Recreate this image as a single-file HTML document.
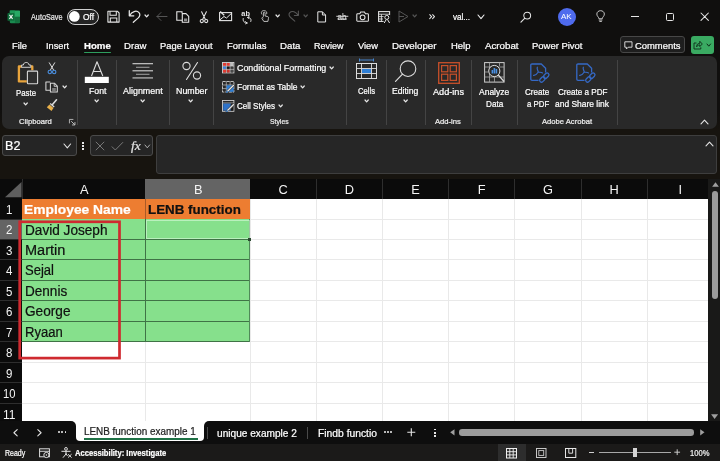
<!DOCTYPE html>
<html lang="en"><head><meta charset="utf-8"><title>Excel - LENB function</title>
<style>
html,body{margin:0;padding:0;background:#100f0e;}
#app{will-change:transform;position:relative;width:720px;height:461px;overflow:hidden;background:#100f0e;font-family:"Liberation Sans",sans-serif;}
.t{-webkit-text-stroke:0.22px currentColor;position:absolute;white-space:nowrap;transform-origin:0 50%;}
.a{position:absolute;}
svg{position:absolute;overflow:visible;}

</style></head><body>
<div id="app">
<svg style="left:7px;top:9.5px;" width="13.2" height="13.5" viewBox="0 0 13.2 13.5" fill="none"><rect x="2.8" y="0.4" width="10.2" height="12.8" rx="1.2" fill="#1a8a4f"/>
<rect x="2.8" y="0.4" width="5.1" height="6.4" fill="#1e9a58"/><rect x="7.9" y="0.8" width="5.1" height="6" fill="#28a965"/><rect x="7.9" y="6.8" width="5.1" height="6" fill="#13703e"/>
<rect x="0.5" y="3" width="7" height="7.8" rx="0.9" fill="#0f6e3b"/>
<path d="M2.4 4.9 L5.6 8.9 M5.6 4.9 L2.4 8.9" stroke="#f2f2f2" stroke-width="1.15"/></svg>
<div class="a" style="left:67px;top:9px;width:30.4px;height:13.6px;border:1px solid #cfcfcf;border-radius:8px;background:#242424;"></div>
<svg style="left:69.3px;top:11.2px;" width="10.8" height="10.8" viewBox="0 0 10.8 10.8" fill="none"><circle cx="5.4" cy="5.4" r="5.3" fill="#ffffff"/></svg>
<svg style="left:107px;top:10px;" width="13" height="13" viewBox="0 0 13 13" fill="none"><path d="M0.9 1.2 H10.3 L12.1 3 V12.1 H0.9 Z" stroke="#e6e6e6" stroke-width="1.1" stroke-linejoin="round"/>
<path d="M3 1.2 V5.2 H9.3 V1.2 M3.3 12 V8 H9.8 V12" stroke="#e6e6e6" stroke-width="1.05"/></svg>
<svg style="left:128px;top:10px;" width="13" height="13" viewBox="0 0 13 13" fill="none"><path d="M1.3 0.7 V5.8 H5.8 M1.6 5.5 C3.8 1.6 8.4 -0.2 11 2.6 C12.8 4.8 11.6 6.6 10 8.1 L5.3 12.3" stroke="#e6e6e6" stroke-width="1.25" stroke-linecap="round" stroke-linejoin="round"/></svg>
<svg style="left:143.54999999999998px;top:14.350000000000001px;" width="5.3" height="3.9" viewBox="0 0 5.3 3.9" fill="none"><path d="M1 1 L2.65 2.9 L4.3 1" stroke="#e8e8e8" stroke-width="1.2" stroke-linecap="round" stroke-linejoin="round"/></svg>
<svg style="left:156px;top:11px;" width="12" height="11" viewBox="0 0 12 11" fill="none"><path d="M11 5.5 H1 M5 1.5 L1 5.5 L5 9.5" stroke="#555" stroke-width="1" stroke-linecap="round" stroke-linejoin="round"/></svg>
<svg style="left:176.3px;top:10.8px;" width="14" height="12" viewBox="0 0 14 12" fill="none"><path d="M6 2.3 V0.8 H0.8 V9.3 H6" stroke="#e6e6e6" stroke-width="1.1"/><path d="M6.3 2.6 H10 L12.7 5.3 V11.3 H6.3 Z" stroke="#e6e6e6" stroke-width="1.1" stroke-linejoin="round"/><rect x="8" y="7.5" width="3.2" height="2.6" fill="#8a8a8a"/></svg>
<svg style="left:199px;top:10.8px;" width="10" height="13" viewBox="0 0 10 13" fill="none"><path d="M2.6 0.8 L6.3 8.3 M7.4 0.8 L3.7 8.3" stroke="#e6e6e6" stroke-width="1.05" stroke-linecap="round"/><circle cx="2.8" cy="10" r="1.6" stroke="#e6e6e6" stroke-width="1.05"/><circle cx="7.2" cy="10" r="1.6" stroke="#e6e6e6" stroke-width="1.05"/></svg>
<svg style="left:218.5px;top:10.5px;" width="13.5" height="10.5" viewBox="0 0 13.5 10.5" fill="none"><rect x="0.6" y="1.6" width="12" height="8" stroke="#e6e6e6" stroke-width="1.1"/><path d="M1 8.8 L5 5.5 L7.5 7 L12.3 2.5" stroke="#e6e6e6" stroke-width="1"/><path d="M1.2 0.5 L5.2 4.2" stroke="#e6e6e6" stroke-width="1.3"/></svg>
<svg style="left:241px;top:9.5px;" width="12" height="14" viewBox="0 0 12 14" fill="none"><text x="0.3" y="6.3" font-family="Liberation Sans, sans-serif" font-size="7.6" font-weight="700" fill="#e6e6e6" textLength="8.6" lengthAdjust="spacingAndGlyphs">ab</text><path d="M2.2 8.5 C1.5 11 3.5 13.2 6 13 M6 13 L4.6 11.6 M6 13 L4.6 13.8 M9.8 11.5 C10.8 9 9 7.2 6.8 7.4 M6.8 7.4 L8.2 6.4 M6.8 7.4 L8 8.8" stroke="#e6e6e6" stroke-width="0.95" stroke-linecap="round"/></svg>
<svg style="left:259.8px;top:10.3px;" width="9.3" height="12.7" viewBox="0 0 11 15" fill="none"><path d="M4 8 V3.5 C4 2.2 6 2.2 6 3.5 V7 L9 7.8 C10 8 10.3 8.8 10 10 L9.3 13.5 H4.5 L2.3 10 C1.8 9 3 8.4 4 9.5" stroke="#e6e6e6" stroke-width="0.95" stroke-linejoin="round"/><path d="M2.2 5.2 C0.5 2 3 0.5 5 0.7 C7.5 0.8 8.7 3 7.8 5" stroke="#e6e6e6" stroke-width="0.9"/></svg>
<svg style="left:274.55px;top:14.350000000000001px;" width="5.3" height="3.9" viewBox="0 0 5.3 3.9" fill="none"><path d="M1 1 L2.65 2.9 L4.3 1" stroke="#e8e8e8" stroke-width="1.2" stroke-linecap="round" stroke-linejoin="round"/></svg>
<svg style="left:288px;top:10.3px;" width="11.5" height="12.2" viewBox="0 0 13 13" fill="none"><path d="M11.7 0.7 V5.8 H7.2 M11.4 5.5 C9.2 1.6 4.6 -0.2 2 2.6 C0.2 4.8 1.4 6.6 3 8.1 L7.7 12.3" stroke="#565656" stroke-width="1.2" stroke-linecap="round" stroke-linejoin="round"/></svg>
<svg style="left:302.85px;top:14.350000000000001px;" width="5.3" height="3.9" viewBox="0 0 5.3 3.9" fill="none"><path d="M1 1 L2.65 2.9 L4.3 1" stroke="#555" stroke-width="1.2" stroke-linecap="round" stroke-linejoin="round"/></svg>
<svg style="left:316.7px;top:10.7px;" width="9.4" height="11.8" viewBox="0 0 9.4 11.8" fill="none"><path d="M0.8 0.8 H5.4 L8.6 4 V11 H0.8 Z M5.4 0.8 V4 H8.6" stroke="#e6e6e6" stroke-width="1" stroke-linejoin="round"/></svg>
<svg style="left:336px;top:10.5px;" width="13" height="12" viewBox="0 0 13 12" fill="none"><text x="1.6" y="9" font-family="Liberation Sans, sans-serif" font-size="8.4" fill="#e6e6e6" textLength="9" lengthAdjust="spacingAndGlyphs">ab</text><path d="M0.3 5.3 H12.3 M1.5 8 H11" stroke="#e6e6e6" stroke-width="0.9"/></svg>
<svg style="left:356.3px;top:10.6px;" width="13.5" height="11" viewBox="0 0 13.5 11" fill="none"><path d="M0.8 3.5 Q0.8 2.7 1.6 2.7 H3.8 L4.7 1 H8.5 L9.4 2.7 H11.6 Q12.4 2.7 12.4 3.5 V9.4 Q12.4 10.2 11.6 10.2 H1.6 Q0.8 10.2 0.8 9.4 Z" stroke="#e6e6e6" stroke-width="1.05"/><circle cx="6.6" cy="6.3" r="2.4" stroke="#e6e6e6" stroke-width="1.05"/></svg>
<svg style="left:378px;top:10.5px;" width="13" height="12.5" viewBox="0 0 13 12.5" fill="none"><rect x="0.6" y="0.6" width="11" height="9.8" stroke="#e6e6e6" stroke-width="1.05"/><path d="M0.6 3.2 H11.6 M0.6 5.6 H6 M0.6 8 H5 M3.4 3.2 V10.4" stroke="#e6e6e6" stroke-width="0.85"/><rect x="5.6" y="4" width="7" height="8.5" fill="#100f0e"/><circle cx="8.8" cy="6.4" r="2" stroke="#e6e6e6" stroke-width="1"/><path d="M6.2 12 L8.2 8.6 M11.6 12 L9.5 8.6" stroke="#e6e6e6" stroke-width="1"/></svg>
<svg style="left:398px;top:10px;" width="11" height="13" viewBox="0 0 11 13" fill="none"><path d="M1 1 L10 6.5 L1 12 Z M1 6.5 H6" stroke="#555" stroke-linejoin="round"/></svg>
<svg style="left:412.35px;top:14.350000000000001px;" width="5.3" height="3.9" viewBox="0 0 5.3 3.9" fill="none"><path d="M1 1 L2.65 2.9 L4.3 1" stroke="#555" stroke-width="1.2" stroke-linecap="round" stroke-linejoin="round"/></svg>
<svg style="left:428.6px;top:14.2px;" width="6.4" height="5.4" viewBox="0 0 6.4 5.4" fill="none"><path d="M0.7 0.7 L2.6 2.7 L0.7 4.7 M3.6 0.7 L5.5 2.7 L3.6 4.7" stroke="#e6e6e6" stroke-width="1.05" stroke-linecap="round" stroke-linejoin="round"/></svg>
<svg style="left:477px;top:14.2px;" width="8" height="5.6" viewBox="0 0 8 5.6" fill="none"><path d="M1 1 L4 4.6 L7 1" stroke="#eee" stroke-width="1.1" stroke-linecap="round" stroke-linejoin="round"/></svg>
<svg style="left:519.6px;top:10.8px;" width="12" height="12" viewBox="0 0 13 13" fill="none"><circle cx="7.8" cy="5" r="3.7" stroke="#e6e6e6" stroke-width="1.1"/><path d="M5 8 L1 12" stroke="#e6e6e6" stroke-width="1.2" stroke-linecap="round"/></svg>
<div class="a" style="left:557.7px;top:7.5px;width:18px;height:18px;border-radius:9px;background:#4f6bed;"></div>
<svg style="left:595.9px;top:10.2px;" width="9.2" height="12.6" viewBox="0 0 11 15" fill="none"><path d="M3.5 10 C3.5 8.5 1 7.5 1 4.8 C1 2.5 3 0.8 5.5 0.8 C8 0.8 10 2.5 10 4.8 C10 7.5 7.5 8.5 7.5 10 Z M3.8 12 H7.2 M4.5 13.7 H6.5" stroke="#e6e6e6" stroke-width="1" stroke-linejoin="round" stroke-linecap="round"/></svg>
<div class="a" style="left:630.5px;top:16px;width:8.0px;height:1px;background:#e6e6e6;"></div>
<div class="a" style="left:665.5px;top:12.5px;width:6.2px;height:6.2px;border:1px solid #e6e6e6;border-radius:1.5px;box-sizing:content-box;"></div>
<svg style="left:700.3px;top:12px;" width="9.4" height="9.4" viewBox="0 0 9.4 9.4" fill="none"><path d="M1 1 L8.4 8.4 M8.4 1 L1 8.4" stroke="#e6e6e6" stroke-width="1.05" stroke-linecap="round"/></svg>
<div class="a" style="left:83.8px;top:51.5px;width:27.5px;height:1.7px;background:#2e9e5e;border-radius:1px;"></div>
<div class="a" style="left:620px;top:36.3px;width:64.8px;height:17px;border:1px solid #474747;border-radius:3px;background:#1e1e1e;box-sizing:border-box;"></div>
<svg style="left:623.5px;top:41px;" width="9" height="9" viewBox="0 0 9 9" fill="none"><path d="M0.8 0.8 H8 V6.2 H4.2 L2.4 8 V6.2 H0.8 Z" stroke="#e6e6e6" stroke-width="0.9" stroke-linejoin="round"/></svg>
<div class="a" style="left:691px;top:36px;width:23px;height:17.5px;border-radius:3px;background:#3aaa62;"></div>
<svg style="left:693.3px;top:39.7px;" width="10" height="10" viewBox="0 0 10 10" fill="none"><path d="M3.5 3 H1 V9 H7.8 V7.3 M3.6 6.8 C3.6 4.3 5 3.3 6.8 3.3 V1.3 L9.3 4 L6.8 6.6 V4.9 C5.4 4.9 4.5 5.4 3.6 6.8 Z" stroke="#0d2b18" stroke-width="0.9" stroke-linejoin="round"/></svg>
<svg style="left:706.0px;top:43.1px;" width="5.6" height="4.2" viewBox="0 0 5.6 4.2" fill="none"><path d="M1 1 L2.8 3.2 L4.6 1" stroke="#0d2b18" stroke-width="1" stroke-linecap="round" stroke-linejoin="round"/></svg>
<div class="a" style="left:0;top:110px;width:720px;height:69px;background:linear-gradient(#100f0e,#17140f 20px);"></div>
<div class="a" style="left:2px;top:56px;width:714.5px;height:73px;border-radius:7px;background:#292929;"></div>
<div class="a" style="left:76.5px;top:60px;width:1.0px;height:65px;background:#444;"></div>
<div class="a" style="left:116.2px;top:60px;width:1.0px;height:65px;background:#444;"></div>
<div class="a" style="left:168.9px;top:60px;width:1.0px;height:65px;background:#444;"></div>
<div class="a" style="left:213.0px;top:60px;width:1.0px;height:65px;background:#444;"></div>
<div class="a" style="left:346.0px;top:60px;width:1.0px;height:65px;background:#444;"></div>
<div class="a" style="left:385.5px;top:60px;width:1.0px;height:65px;background:#444;"></div>
<div class="a" style="left:424.8px;top:60px;width:1.0px;height:65px;background:#444;"></div>
<div class="a" style="left:470.5px;top:60px;width:1.0px;height:65px;background:#444;"></div>
<div class="a" style="left:516.5px;top:60px;width:1.0px;height:65px;background:#444;"></div>
<div class="a" style="left:616.5px;top:60px;width:1.0px;height:65px;background:#444;"></div>
<svg style="left:17px;top:61px;" width="22" height="24" viewBox="0 0 22 24" fill="none"><path d="M5.2 5.5 H1.9 V20.4 H9.8" stroke="#e8a43c" stroke-width="2.3" stroke-linejoin="round"/><path d="M13.8 5.5 H15.3 V9.3" stroke="#e8a43c" stroke-width="2.3" stroke-linejoin="round"/>
<path d="M4.6 6.3 V4 H6.4 C6.4 0.6 12 0.6 12 4 H13.8 V6.3 Z" stroke="#cfcfcf" stroke-width="1" fill="#292929" stroke-linejoin="round"/>
<rect x="10.4" y="10.1" width="10.2" height="12.6" rx="0.8" stroke="#d8d8d8" stroke-width="1.1" fill="#2e2e2e"/></svg>
<svg style="left:22.650000000000002px;top:102.25px;" width="5.3" height="3.9" viewBox="0 0 5.3 3.9" fill="none"><path d="M1 1 L2.65 2.9 L4.3 1" stroke="#e8e8e8" stroke-width="1.2" stroke-linecap="round" stroke-linejoin="round"/></svg>
<svg style="left:46.5px;top:62px;" width="10" height="13" viewBox="0 0 10 13" fill="none"><path d="M2.3 0.8 L6.6 8 M7.7 0.8 L3.4 8" stroke="#dcdcdc" stroke-width="1" stroke-linecap="round"/><circle cx="2.8" cy="10" r="1.7" stroke="#4a90e2" stroke-width="1.1"/><circle cx="7.2" cy="10" r="1.7" stroke="#4a90e2" stroke-width="1.1"/></svg>
<svg style="left:44.5px;top:81px;" width="13.5" height="12" viewBox="0 0 13.5 12" fill="none"><path d="M5 1.6 V0.9 H0.9 V9.3 H5" stroke="#d8d8d8" stroke-width="1.05" stroke-linejoin="round"/><path d="M5.4 2.2 H9.4 L12.3 5.1 V11 H5.4 Z" stroke="#d8d8d8" stroke-width="1.05" stroke-linejoin="round"/><path d="M9.2 2.5 V5.3 H12" stroke="#d8d8d8" stroke-width="0.9"/><rect x="7.2" y="7" width="3.6" height="3" fill="#7d7d7d"/></svg>
<svg style="left:62.35px;top:85.25px;" width="5.3" height="3.9" viewBox="0 0 5.3 3.9" fill="none"><path d="M1 1 L2.65 2.9 L4.3 1" stroke="#e8e8e8" stroke-width="1.2" stroke-linecap="round" stroke-linejoin="round"/></svg>
<svg style="left:46px;top:99px;" width="12" height="13" viewBox="0 0 12 13" fill="none"><path d="M10.5 0.8 L6.5 5.5" stroke="#dcdcdc" stroke-width="1.6" stroke-linecap="round"/><path d="M4.2 4.5 L8.2 8" stroke="#dcdcdc" stroke-width="1.3"/><path d="M3.5 5.5 L7.5 9 L5.5 12 L0.8 8.2 Z" fill="#e8b04a"/></svg>
<svg style="left:68.6px;top:119px;" width="7" height="7" viewBox="0 0 8 8" fill="none"><path d="M0.5 5 V0.5 H5" stroke="#cfcfcf" stroke-width="0.9"/><path d="M2.5 2.5 L6.5 6.5 M6.8 3.5 V6.8 H3.5" stroke="#cfcfcf" stroke-width="1"/></svg>
<svg style="left:84px;top:60px;" width="26" height="24" viewBox="0 0 26 24" fill="none"><path d="M7.5 16 L13 1.8 L18.8 16 M9.4 11.5 H16.9" stroke="#dcdcdc" stroke-width="1.1" stroke-linejoin="round"/><rect x="0.8" y="16.8" width="24" height="6.2" fill="#ffffff"/></svg>
<svg style="left:94.05px;top:99.35px;" width="5.3" height="3.9" viewBox="0 0 5.3 3.9" fill="none"><path d="M1 1 L2.65 2.9 L4.3 1" stroke="#e8e8e8" stroke-width="1.2" stroke-linecap="round" stroke-linejoin="round"/></svg>
<svg style="left:131px;top:62px;" width="23" height="18" viewBox="0 0 23 18" fill="none"><path d="M1.5 1.7 H22" stroke="#d6d6d6" stroke-width="1.1"/><path d="M5 5.3 H18.5" stroke="#9a9a9a" stroke-width="1.1"/><path d="M1.5 8.8 H22" stroke="#d6d6d6" stroke-width="1.1"/><path d="M5 12.3 H18.5" stroke="#9a9a9a" stroke-width="1.1"/><path d="M1.5 15.9 H22" stroke="#9a9a9a" stroke-width="1.6"/></svg>
<svg style="left:139.65px;top:99.35px;" width="5.3" height="3.9" viewBox="0 0 5.3 3.9" fill="none"><path d="M1 1 L2.65 2.9 L4.3 1" stroke="#e8e8e8" stroke-width="1.2" stroke-linecap="round" stroke-linejoin="round"/></svg>
<svg style="left:182px;top:61px;" width="20" height="20" viewBox="0 0 20 20" fill="none"><circle cx="4.5" cy="5" r="3.6" stroke="#dcdcdc" stroke-width="1.1"/><circle cx="15" cy="14.5" r="3.6" stroke="#dcdcdc" stroke-width="1.1"/><path d="M15.5 1.5 L4.5 18.5" stroke="#dcdcdc" stroke-width="1.1" stroke-linecap="round"/></svg>
<svg style="left:188.35px;top:99.35px;" width="5.3" height="3.9" viewBox="0 0 5.3 3.9" fill="none"><path d="M1 1 L2.65 2.9 L4.3 1" stroke="#e8e8e8" stroke-width="1.2" stroke-linecap="round" stroke-linejoin="round"/></svg>
<svg style="left:222px;top:62px;" width="12.4" height="11.4" viewBox="0 0 12.4 11.4" fill="none"><rect x="0.5" y="0.5" width="11.4" height="10.4" stroke="#d4d4d4" stroke-width="0.9"/><rect x="1" y="1" width="3.4" height="3" fill="#e03a32"/><rect x="4.6" y="1" width="3.4" height="3" fill="#e03a32"/><rect x="8.2" y="1" width="3.2" height="3" fill="#bdbdbd"/><rect x="1" y="4.3" width="3.4" height="3" fill="#3f7fd9"/><rect x="4.6" y="4.3" width="3.4" height="3" fill="#1a1a1a"/><rect x="8.2" y="4.3" width="3.2" height="3" fill="#3a3a3a"/><rect x="1" y="7.5" width="3.4" height="3" fill="#e03a32"/><rect x="4.6" y="7.5" width="3.4" height="3" fill="#c8342c"/><rect x="8.2" y="7.5" width="3.2" height="3" fill="#4a4a4a"/><path d="M4.5 0.5 V11 M8.1 0.5 V11 M0.5 4.15 H12 M0.5 7.4 H12" stroke="#d4d4d4" stroke-width="0.6"/></svg>
<svg style="left:222px;top:81px;" width="13" height="12.4" viewBox="0 0 13 12.4" fill="none"><rect x="0.5" y="0.5" width="11.4" height="10.6" stroke="#d0d0d0" stroke-width="0.9" stroke-dasharray="3.2 0.8"/><path d="M4.3 0.5 V11 M8.1 0.5 V11 M0.5 4 H12 M0.5 7.6 H12" stroke="#bdbdbd" stroke-width="0.7"/><rect x="4.6" y="4.3" width="7" height="6.5" fill="#2f7fd6"/><path d="M11.3 3.2 L5.2 9.3 L3.6 12 L6.6 10.6 L12.6 4.6 Z" fill="#e4e4e4" stroke="#292929" stroke-width="0.6"/><path d="M3.6 12 L5 9.8 L6.2 11 Z" fill="#2f7fd6"/></svg>
<svg style="left:222px;top:99.8px;" width="13" height="12.4" viewBox="0 0 13 12.4" fill="none"><rect x="0.5" y="0.5" width="11.4" height="10.8" stroke="#d0d0d0" stroke-width="0.9"/><path d="M0.5 3 H12" stroke="#bdbdbd" stroke-width="0.8"/><rect x="1.2" y="3.6" width="7.6" height="7" fill="#2f73c9"/><rect x="8.8" y="3.6" width="2.6" height="7" fill="#1c1c1c"/><path d="M11.3 3.4 L5.2 9.5 L3.6 12.2 L6.6 10.8 L12.6 4.8 Z" fill="#e4e4e4" stroke="#292929" stroke-width="0.6"/><path d="M3.6 12.2 L5 10 L6.2 11.2 Z" fill="#2f7fd6"/></svg>
<svg style="left:329.05px;top:66.25px;" width="5.3" height="3.9" viewBox="0 0 5.3 3.9" fill="none"><path d="M1 1 L2.65 2.9 L4.3 1" stroke="#e8e8e8" stroke-width="1.2" stroke-linecap="round" stroke-linejoin="round"/></svg>
<svg style="left:299.65000000000003px;top:85.25px;" width="5.3" height="3.9" viewBox="0 0 5.3 3.9" fill="none"><path d="M1 1 L2.65 2.9 L4.3 1" stroke="#e8e8e8" stroke-width="1.2" stroke-linecap="round" stroke-linejoin="round"/></svg>
<svg style="left:277.55px;top:104.05px;" width="5.3" height="3.9" viewBox="0 0 5.3 3.9" fill="none"><path d="M1 1 L2.65 2.9 L4.3 1" stroke="#e8e8e8" stroke-width="1.2" stroke-linecap="round" stroke-linejoin="round"/></svg>
<svg style="left:355px;top:58px;" width="23" height="22" viewBox="0 0 23 22" fill="none"><path d="M4.5 2 H18.5 M4.5 0.5 V3.5 M18.5 0.5 V3.5" stroke="#4a90e2" stroke-width="0.9"/><rect x="1.5" y="5.5" width="20" height="15" stroke="#dcdcdc" stroke-width="1"/><path d="M1.5 10.5 H21.5 M1.5 15.5 H21.5 M6.5 5.5 V20.5 M16.5 5.5 V20.5" stroke="#dcdcdc" stroke-width="0.9"/><rect x="7" y="11" width="9" height="4" fill="#2f7fd6"/></svg>
<svg style="left:363.85px;top:99.35px;" width="5.3" height="3.9" viewBox="0 0 5.3 3.9" fill="none"><path d="M1 1 L2.65 2.9 L4.3 1" stroke="#e8e8e8" stroke-width="1.2" stroke-linecap="round" stroke-linejoin="round"/></svg>
<svg style="left:394px;top:60px;" width="24" height="24" viewBox="0 0 24 24" fill="none"><circle cx="14" cy="8.7" r="7.8" stroke="#dcdcdc" stroke-width="1.1"/><path d="M8.5 14.2 L1.5 21.3" stroke="#dcdcdc" stroke-width="1.2" stroke-linecap="round"/></svg>
<svg style="left:402.85px;top:99.35px;" width="5.3" height="3.9" viewBox="0 0 5.3 3.9" fill="none"><path d="M1 1 L2.65 2.9 L4.3 1" stroke="#e8e8e8" stroke-width="1.2" stroke-linecap="round" stroke-linejoin="round"/></svg>
<svg style="left:438px;top:62px;" width="22" height="22" viewBox="0 0 22 22" fill="none"><rect x="0.7" y="0.7" width="20.6" height="20.6" stroke="#c8502a" stroke-width="1.3"/><rect x="3.6" y="3.6" width="6.2" height="6.2" stroke="#c8502a" stroke-width="1.2"/><rect x="12.2" y="3.6" width="6.2" height="6.2" stroke="#c8502a" stroke-width="1.2"/><rect x="3.6" y="12.2" width="6.2" height="6.2" stroke="#c8502a" stroke-width="1.2"/><rect x="12.2" y="12.2" width="6.2" height="6.2" stroke="#c8502a" stroke-width="1.2"/></svg>
<svg style="left:484px;top:62px;" width="21" height="22" viewBox="0 0 21 22" fill="none"><rect x="0.6" y="0.6" width="19.5" height="19.5" stroke="#cfcfcf" stroke-width="1"/><path d="M0.6 5 H20 M5.5 0.6 V20 M0.6 10 H4 M0.6 15 H20 M10.5 15 V20 M15.5 0.6 V4" stroke="#a8a8a8" stroke-width="0.8"/><circle cx="10.3" cy="9" r="5.6" fill="#292929" stroke="#dcdcdc" stroke-width="1"/><path d="M14.3 13 L20 19.5" stroke="#dcdcdc" stroke-width="1.2"/><rect x="7.6" y="8" width="1.6" height="3.5" fill="#4a90e2"/><rect x="9.6" y="6" width="1.6" height="5.5" fill="#4a90e2"/><rect x="11.6" y="7" width="1.6" height="4.5" fill="#4a90e2"/></svg>
<svg style="left:530px;top:63px;" width="20" height="21" viewBox="0 0 20 21" fill="none"><path d="M8.5 17.3 H2 Q0.8 17.3 0.8 16.1 V2.2 Q0.8 1 2 1 H11.3 L15.6 5.3 V9.5" stroke="#3569c6" stroke-width="1.3" stroke-linejoin="round"/>
<path d="M7.3 4.2 C6.6 5.8 8 8 8.3 9 C7 11 5 12.6 3.6 12.4 M8.3 9 C9.5 9.3 11.5 9.3 12.5 9.9" stroke="#3569c6" stroke-width="1.2" stroke-linecap="round" stroke-linejoin="round"/>
<rect x="9.3" y="14.6" width="6.2" height="3.7" rx="1.85" transform="rotate(-45 12.4 16.45)" stroke="#3569c6" stroke-width="1.3"/>
<rect x="13.1" y="10.9" width="6.2" height="3.7" rx="1.85" transform="rotate(-45 16.2 12.75)" stroke="#3569c6" stroke-width="1.3"/></svg>
<svg style="left:575.8px;top:63px;" width="20" height="21" viewBox="0 0 20 21" fill="none"><path d="M8.5 17.3 H2 Q0.8 17.3 0.8 16.1 V2.2 Q0.8 1 2 1 H11.3 L15.6 5.3 V9.5" stroke="#3569c6" stroke-width="1.3" stroke-linejoin="round"/>
<path d="M7.3 4.2 C6.6 5.8 8 8 8.3 9 C7 11 5 12.6 3.6 12.4 M8.3 9 C9.5 9.3 11.5 9.3 12.5 9.9" stroke="#3569c6" stroke-width="1.2" stroke-linecap="round" stroke-linejoin="round"/>
<rect x="9.3" y="14.6" width="6.2" height="3.7" rx="1.85" transform="rotate(-45 12.4 16.45)" stroke="#3569c6" stroke-width="1.3"/>
<rect x="13.1" y="10.9" width="6.2" height="3.7" rx="1.85" transform="rotate(-45 16.2 12.75)" stroke="#3569c6" stroke-width="1.3"/></svg>
<svg style="left:700px;top:118.5px;" width="9" height="6" viewBox="0 0 9 6" fill="none"><path d="M1 4.8 L4.5 1.2 L8 4.8" stroke="#e6e6e6" stroke-width="1.1" stroke-linecap="round" stroke-linejoin="round"/></svg>
<div class="a" style="left:2px;top:135px;width:74.5px;height:21px;border:1px solid #4a4a4a;border-radius:3px;background:#252525;box-sizing:border-box;"></div>
<svg style="left:63.3px;top:143.29999999999998px;" width="8.6" height="5.8" viewBox="0 0 8.6 5.8" fill="none"><path d="M1 1 L4.3 4.8 L7.6 1" stroke="#e2e2e2" stroke-width="1.1" stroke-linecap="round" stroke-linejoin="round"/></svg>
<div class="a" style="left:82.3px;top:142.3px;width:1.5px;height:1.5px;background:#e6e6e6;"></div>
<div class="a" style="left:82.3px;top:145.3px;width:1.5px;height:1.5px;background:#e6e6e6;"></div>
<div class="a" style="left:82.3px;top:148.3px;width:1.5px;height:1.5px;background:#e6e6e6;"></div>
<div class="a" style="left:90px;top:135px;width:63px;height:21px;border:1px solid #4a4a4a;border-radius:3px;background:#252525;box-sizing:border-box;"></div>
<svg style="left:95px;top:140.5px;" width="10" height="10" viewBox="0 0 10 10" fill="none"><path d="M0.8 0.8 L9.2 9.2 M9.2 0.8 L0.8 9.2" stroke="#7c7c7c" stroke-width="0.95"/></svg>
<svg style="left:111px;top:141px;" width="13" height="10" viewBox="0 0 13 10" fill="none"><path d="M0.8 5.5 L4.3 9 L12 1.2" stroke="#7c7c7c" stroke-width="0.95"/></svg>
<svg style="left:144.0px;top:143.6px;" width="6.6" height="4.8" viewBox="0 0 6.6 4.8" fill="none"><path d="M1 1 L3.3 3.8 L5.6 1" stroke="#bbb" stroke-width="0.9" stroke-linecap="round" stroke-linejoin="round"/></svg>
<div class="a" style="left:156px;top:135px;width:560.5px;height:38.5px;border:1px solid #3e3e3e;border-radius:3px;background:#262626;box-sizing:border-box;"></div>
<svg style="left:705px;top:141.3px;" width="9" height="6" viewBox="0 0 9 6" fill="none"><path d="M1 4.8 L4.5 1.2 L8 4.8" stroke="#e6e6e6" stroke-width="1.1" stroke-linecap="round" stroke-linejoin="round"/></svg>
<div class="a" style="left:0px;top:178.8px;width:707.5px;height:19.8px;background:#0b0b0b;"></div>
<div class="a" style="left:0px;top:198.6px;width:22px;height:222.1px;background:#0b0b0b;"></div>
<div class="a" style="left:22px;top:198.6px;width:685.5px;height:222.1px;background:#ffffff;"></div>
<div class="a" style="left:145px;top:178.8px;width:105px;height:19.8px;background:#646464;"></div>
<div class="a" style="left:0px;top:219.04999999999998px;width:22px;height:20.45px;background:#646464;"></div>
<svg style="left:4.5px;top:181.5px;" width="16.5" height="15.3" viewBox="0 0 16.5 15.3" fill="none"><path d="M16.5 0 V15.3 H0 Z" fill="#5f5f5f"/></svg>
<div class="a" style="left:21.5px;top:178.8px;width:1.0px;height:19.8px;background:#2e2e2e;"></div>
<div class="a" style="left:315.7px;top:178.8px;width:1.0px;height:19.8px;background:#2e2e2e;"></div>
<div class="a" style="left:381.9px;top:178.8px;width:1.0px;height:19.8px;background:#2e2e2e;"></div>
<div class="a" style="left:448.1px;top:178.8px;width:1.0px;height:19.8px;background:#2e2e2e;"></div>
<div class="a" style="left:514.3px;top:178.8px;width:1.0px;height:19.8px;background:#2e2e2e;"></div>
<div class="a" style="left:580.5px;top:178.8px;width:1.0px;height:19.8px;background:#2e2e2e;"></div>
<div class="a" style="left:646.7px;top:178.8px;width:1.0px;height:19.8px;background:#2e2e2e;"></div>
<div class="a" style="left:0px;top:218.55px;width:22px;height:1.0px;background:#2e2e2e;"></div>
<div class="a" style="left:0px;top:239.0px;width:22px;height:1.0px;background:#2e2e2e;"></div>
<div class="a" style="left:0px;top:259.45px;width:22px;height:1.0px;background:#2e2e2e;"></div>
<div class="a" style="left:0px;top:279.9px;width:22px;height:1.0px;background:#2e2e2e;"></div>
<div class="a" style="left:0px;top:300.35px;width:22px;height:1.0px;background:#2e2e2e;"></div>
<div class="a" style="left:0px;top:320.8px;width:22px;height:1.0px;background:#2e2e2e;"></div>
<div class="a" style="left:0px;top:341.25px;width:22px;height:1.0px;background:#2e2e2e;"></div>
<div class="a" style="left:0px;top:361.7px;width:22px;height:1.0px;background:#2e2e2e;"></div>
<div class="a" style="left:0px;top:382.15px;width:22px;height:1.0px;background:#2e2e2e;"></div>
<div class="a" style="left:0px;top:402.6px;width:22px;height:1.0px;background:#2e2e2e;"></div>
<div class="a" style="left:144.5px;top:198.6px;width:1.0px;height:222.1px;background:#e9e9e9;"></div>
<div class="a" style="left:249.5px;top:198.6px;width:1.0px;height:222.1px;background:#e9e9e9;"></div>
<div class="a" style="left:315.7px;top:198.6px;width:1.0px;height:222.1px;background:#e9e9e9;"></div>
<div class="a" style="left:381.9px;top:198.6px;width:1.0px;height:222.1px;background:#e9e9e9;"></div>
<div class="a" style="left:448.1px;top:198.6px;width:1.0px;height:222.1px;background:#e9e9e9;"></div>
<div class="a" style="left:514.3px;top:198.6px;width:1.0px;height:222.1px;background:#e9e9e9;"></div>
<div class="a" style="left:580.5px;top:198.6px;width:1.0px;height:222.1px;background:#e9e9e9;"></div>
<div class="a" style="left:646.7px;top:198.6px;width:1.0px;height:222.1px;background:#e9e9e9;"></div>
<div class="a" style="left:22px;top:218.55px;width:685.5px;height:1.0px;background:#e9e9e9;"></div>
<div class="a" style="left:22px;top:239.0px;width:685.5px;height:1.0px;background:#e9e9e9;"></div>
<div class="a" style="left:22px;top:259.45px;width:685.5px;height:1.0px;background:#e9e9e9;"></div>
<div class="a" style="left:22px;top:279.9px;width:685.5px;height:1.0px;background:#e9e9e9;"></div>
<div class="a" style="left:22px;top:300.35px;width:685.5px;height:1.0px;background:#e9e9e9;"></div>
<div class="a" style="left:22px;top:320.8px;width:685.5px;height:1.0px;background:#e9e9e9;"></div>
<div class="a" style="left:22px;top:341.25px;width:685.5px;height:1.0px;background:#e9e9e9;"></div>
<div class="a" style="left:22px;top:361.7px;width:685.5px;height:1.0px;background:#e9e9e9;"></div>
<div class="a" style="left:22px;top:382.15px;width:685.5px;height:1.0px;background:#e9e9e9;"></div>
<div class="a" style="left:22px;top:402.6px;width:685.5px;height:1.0px;background:#e9e9e9;"></div>
<div class="a" style="left:22px;top:198.6px;width:228px;height:20.45px;background:#ed7d31;"></div>
<div class="a" style="left:144.5px;top:198.6px;width:1.0px;height:20.45px;background:#a85a28;"></div>
<div class="a" style="left:22px;top:219.04999999999998px;width:228px;height:122.7px;background:#86e08c;"></div>
<div class="a" style="left:22px;top:239.0px;width:228.3px;height:1.0px;background:#3f7346;"></div>
<div class="a" style="left:22px;top:259.45px;width:228.3px;height:1.0px;background:#3f7346;"></div>
<div class="a" style="left:22px;top:279.9px;width:228.3px;height:1.0px;background:#3f7346;"></div>
<div class="a" style="left:22px;top:300.35px;width:228.3px;height:1.0px;background:#3f7346;"></div>
<div class="a" style="left:22px;top:320.8px;width:228.3px;height:1.0px;background:#3f7346;"></div>
<div class="a" style="left:22px;top:341.25px;width:228.3px;height:1.0px;background:#3f7346;"></div>
<div class="a" style="left:144.5px;top:219.04999999999998px;width:1.0px;height:122.7px;background:#3f7346;"></div>
<div class="a" style="left:249.4px;top:219.04999999999998px;width:0.9px;height:122.7px;background:#4f8a58;"></div>
<div class="a" style="left:145.5px;top:219.55px;width:104px;height:19.45px;border:1px solid rgba(235,255,238,0.5);box-sizing:border-box;"></div>
<div class="a" style="left:248.3px;top:238.3px;width:2.7px;height:2.7px;background:#2a4a30;"></div>
<svg style="left:0px;top:0px;" width="720" height="461" viewBox="0 0 720 461" fill="none"><rect x="19.7" y="221.8" width="99.8" height="136.3" stroke="#cf2a30" stroke-width="2.7"/></svg>
<div class="a" style="left:707.5px;top:178.8px;width:12.5px;height:242.4px;background:#191918;"></div>
<svg style="left:711.5px;top:182.3px;" width="7" height="5" viewBox="0 0 7 5" fill="none"><path d="M3.5 0.2 L6.9 4.8 H0.1 Z" fill="#a0a0a0"/></svg>
<div class="a" style="left:712.2px;top:190.5px;width:6.1px;height:108.5px;border-radius:3.05px;background:#9b9b9b;"></div>
<svg style="left:711.3px;top:413.8px;" width="7.2" height="5" viewBox="0 0 7.2 5" fill="none"><path d="M3.6 4.9 L7.1 0.2 H0.1 Z" fill="#a0a0a0"/></svg>
<div class="a" style="left:60px;top:420.7px;width:160px;height:7.3px;background:#ffffff;"></div>
<div class="a" style="left:0px;top:421.2px;width:75.5px;height:22.8px;background:#0e0e0e;border-top-right-radius:5px;"></div>
<div class="a" style="left:204px;top:421.2px;width:516px;height:22.8px;background:#0e0e0e;border-top-left-radius:5px;"></div>
<div class="a" style="left:75.5px;top:421px;width:128.5px;height:20.3px;background:#ffffff;border-radius:0 0 4px 4px;"></div>
<div class="a" style="left:0px;top:441.3px;width:720px;height:2.7px;background:#0e0e0e;"></div>
<div class="a" style="left:0px;top:443.8px;width:720px;height:17.2px;background:#1b1a19;"></div>
<div class="a" style="left:83.5px;top:438.2px;width:114.0px;height:1.8px;background:#1e7145;"></div>
<svg style="left:12.5px;top:429px;" width="5" height="7.5" viewBox="0 0 5 7.5" fill="none"><path d="M4.2 0.6 L0.9 3.75 L4.2 6.9" stroke="#e6e6e6" stroke-width="1.05" stroke-linecap="round" stroke-linejoin="round"/></svg>
<svg style="left:36.5px;top:429px;" width="5" height="7.5" viewBox="0 0 5 7.5" fill="none"><path d="M0.8 0.6 L4.1 3.75 L0.8 6.9" stroke="#e6e6e6" stroke-width="1.05" stroke-linecap="round" stroke-linejoin="round"/></svg>
<div class="a" style="left:58.3px;top:431.3px;width:1.7px;height:1.7px;background:#f0f0f0;border-radius:1px;"></div>
<div class="a" style="left:61.4px;top:431.3px;width:1.7px;height:1.7px;background:#f0f0f0;border-radius:1px;"></div>
<div class="a" style="left:64.5px;top:431.3px;width:1.7px;height:1.7px;background:#f0f0f0;border-radius:1px;"></div>
<div class="a" style="left:206.6px;top:427px;width:1.0px;height:12px;background:#4a4a4a;"></div>
<div class="a" style="left:307px;top:427px;width:1px;height:12px;background:#4a4a4a;"></div>
<div class="a" style="left:384px;top:431.3px;width:1.6px;height:1.6px;background:#f0f0f0;border-radius:1px;"></div>
<div class="a" style="left:387.1px;top:431.3px;width:1.6px;height:1.6px;background:#f0f0f0;border-radius:1px;"></div>
<div class="a" style="left:390.2px;top:431.3px;width:1.6px;height:1.6px;background:#f0f0f0;border-radius:1px;"></div>
<svg style="left:407px;top:428.2px;" width="8.6" height="8.6" viewBox="0 0 8.6 8.6" fill="none"><path d="M4.3 0.3 V8.3 M0.3 4.3 H8.3" stroke="#e6e6e6" stroke-width="1.1"/></svg>
<div class="a" style="left:434.3px;top:428.8px;width:1.5px;height:1.5px;background:#e6e6e6;"></div>
<div class="a" style="left:434.3px;top:432px;width:1.5px;height:1.5px;background:#e6e6e6;"></div>
<div class="a" style="left:434.3px;top:435.2px;width:1.5px;height:1.5px;background:#e6e6e6;"></div>
<svg style="left:450px;top:429.3px;" width="4.6" height="6.6" viewBox="0 0 4.6 6.6" fill="none"><path d="M4.5 0.2 V6.4 L0.2 3.3 Z" fill="#a0a0a0"/></svg>
<div class="a" style="left:458.8px;top:429.2px;width:235px;height:6.4px;border-radius:3.2px;background:#9c9c9c;"></div>
<svg style="left:700.3px;top:429.3px;" width="4.6" height="6.6" viewBox="0 0 4.6 6.6" fill="none"><path d="M0.2 0.2 V6.4 L4.5 3.3 Z" fill="#a0a0a0"/></svg>
<div class="a" style="left:497.5px;top:444px;width:28.5px;height:17px;background:#2d2d2d;"></div>
<svg style="left:38.5px;top:447.5px;" width="12" height="11" viewBox="0 0 12 11" fill="none"><rect x="0.6" y="0.8" width="9.8" height="8" stroke="#e6e6e6" stroke-width="0.95"/><path d="M0.6 3.3 H10.4" stroke="#e6e6e6" stroke-width="0.9"/><circle cx="7.4" cy="7" r="2.6" fill="#1b1a19" stroke="#e6e6e6" stroke-width="0.95"/><circle cx="7.4" cy="7" r="0.8" fill="#e6e6e6"/></svg>
<svg style="left:61px;top:447.3px;" width="12" height="11" viewBox="0 0 12 11" fill="none"><circle cx="5" cy="1.9" r="1.4" stroke="#e6e6e6" stroke-width="0.95"/><path d="M0.8 4.3 H9.2 M5 4.3 V7 M5 7 L2.2 10.4 M5 7 L6.3 8.6" stroke="#e6e6e6" stroke-width="1" stroke-linecap="round"/><path d="M7 7.2 L10.6 10.6 M10.6 7.2 L7 10.6" stroke="#e6e6e6" stroke-width="0.95"/></svg>
<svg style="left:506.3px;top:447.5px;" width="11" height="10.5" viewBox="0 0 11 10.5" fill="none"><rect x="0.5" y="0.5" width="10" height="9.5" stroke="#f0f0f0" stroke-width="1"/><path d="M3.8 0.5 V10 M7.2 0.5 V10 M0.5 3.7 H10.5 M0.5 6.9 H10.5" stroke="#f0f0f0" stroke-width="0.9"/></svg>
<svg style="left:535.8px;top:447.8px;" width="10.5" height="10" viewBox="0 0 10.5 10" fill="none"><rect x="0.5" y="0.5" width="9.5" height="9" stroke="#d0d0d0" stroke-width="0.95"/><rect x="2.8" y="2.6" width="4.9" height="4.8" stroke="#d0d0d0" stroke-width="0.85"/></svg>
<svg style="left:565px;top:447.5px;" width="11.5" height="10" viewBox="0 0 11.5 10" fill="none"><rect x="0.5" y="0.5" width="10.3" height="9" stroke="#e6e6e6" stroke-width="1"/><path d="M3.8 0.5 V5.2 H7.6 V0.5" stroke="#e6e6e6" stroke-width="0.95"/></svg>
<div class="a" style="left:589.3px;top:452.1px;width:5.2px;height:0.9px;background:#d0d0d0;"></div>
<div class="a" style="left:598.8px;top:452.2px;width:72.5px;height:0.8px;background:#a8a8a8;"></div>
<div class="a" style="left:633.2px;top:448px;width:3.6px;height:9.2px;background:#d4d4d4;"></div>
<svg style="left:674.3px;top:449.4px;" width="6.4" height="6.4" viewBox="0 0 6.4 6.4" fill="none"><path d="M3.2 0.3 V6.1 M0.3 3.2 H6.1" stroke="#d0d0d0" stroke-width="0.95"/></svg>
<span class="t" style="left:31px;top:13px;font-size:8.2px;line-height:10.66px;color:#e8e8e8;transform:scaleX(0.8869);">AutoSave</span>
<span class="t" style="left:83px;top:13px;font-size:8.2px;line-height:10.66px;color:#fff;transform:scaleX(1.0203);">Off</span>
<span class="t" style="left:453px;top:12px;font-size:8.6px;line-height:11.18px;color:#fff;transform:scaleX(0.9363);">val...</span>
<span class="t" style="left:561.3px;top:12px;font-size:7.4px;line-height:9.62px;color:#fff;transform:scaleX(1.0853);-webkit-text-stroke:0;">AK</span>
<span class="t" style="left:12px;top:40px;font-size:9.4px;line-height:12.22px;color:#fff;transform:scaleX(0.9928);">File</span>
<span class="t" style="left:46px;top:40px;font-size:9.4px;line-height:12.22px;color:#fff;transform:scaleX(0.9807);">Insert</span>
<span class="t" style="left:84px;top:40px;font-size:9.4px;line-height:12.22px;color:#fff;font-weight:700;transform:scaleX(1.0289);">Home</span>
<span class="t" style="left:124px;top:40px;font-size:9.4px;line-height:12.22px;color:#fff;transform:scaleX(1.0278);">Draw</span>
<span class="t" style="left:160px;top:40px;font-size:9.4px;line-height:12.22px;color:#fff;transform:scaleX(0.9970);">Page Layout</span>
<span class="t" style="left:227px;top:40px;font-size:9.4px;line-height:12.22px;color:#fff;transform:scaleX(1.0108);">Formulas</span>
<span class="t" style="left:280px;top:40px;font-size:9.4px;line-height:12.22px;color:#fff;transform:scaleX(1.0347);">Data</span>
<span class="t" style="left:314px;top:40px;font-size:9.4px;line-height:12.22px;color:#fff;transform:scaleX(0.9593);">Review</span>
<span class="t" style="left:358px;top:40px;font-size:9.4px;line-height:12.22px;color:#fff;transform:scaleX(0.9922);">View</span>
<span class="t" style="left:392px;top:40px;font-size:9.4px;line-height:12.22px;color:#fff;transform:scaleX(1.0413);">Developer</span>
<span class="t" style="left:451px;top:40px;font-size:9.4px;line-height:12.22px;color:#fff;transform:scaleX(1.0113);">Help</span>
<span class="t" style="left:485px;top:40px;font-size:9.4px;line-height:12.22px;color:#fff;transform:scaleX(1.0368);">Acrobat</span>
<span class="t" style="left:532px;top:40px;font-size:9.4px;line-height:12.22px;color:#fff;transform:scaleX(1.0094);">Power Pivot</span>
<span class="t" style="left:635px;top:40px;font-size:9.4px;line-height:12.22px;color:#fff;transform:scaleX(1.0038);">Comments</span>
<span class="t" style="left:15.8px;top:87px;font-size:9.3px;line-height:12.09px;color:#fff;transform:scaleX(0.8410);">Paste</span>
<span class="t" style="left:18.5px;top:117px;font-size:8.0px;line-height:10.4px;color:#f0f0f0;transform:scaleX(0.9577);">Clipboard</span>
<span class="t" style="left:88.5px;top:85px;font-size:9.3px;line-height:12.09px;color:#fff;transform:scaleX(0.9404);">Font</span>
<span class="t" style="left:122.8px;top:85px;font-size:9.3px;line-height:12.09px;color:#fff;transform:scaleX(0.9602);">Alignment</span>
<span class="t" style="left:175.5px;top:85px;font-size:9.3px;line-height:12.09px;color:#fff;transform:scaleX(0.9523);">Number</span>
<span class="t" style="left:237px;top:62px;font-size:9.3px;line-height:12.09px;color:#fff;transform:scaleX(0.9546);">Conditional Formatting</span>
<span class="t" style="left:237px;top:81px;font-size:9.3px;line-height:12.09px;color:#fff;transform:scaleX(0.9098);">Format as Table</span>
<span class="t" style="left:237px;top:100px;font-size:9.3px;line-height:12.09px;color:#fff;transform:scaleX(0.8652);">Cell Styles</span>
<span class="t" style="left:270.4px;top:117px;font-size:8.0px;line-height:10.4px;color:#f0f0f0;transform:scaleX(0.8533);">Styles</span>
<span class="t" style="left:358px;top:85px;font-size:9.3px;line-height:12.09px;color:#fff;transform:scaleX(0.8224);">Cells</span>
<span class="t" style="left:392.3px;top:85px;font-size:9.3px;line-height:12.09px;color:#fff;transform:scaleX(0.9284);">Editing</span>
<span class="t" style="left:433px;top:86px;font-size:9.3px;line-height:12.09px;color:#fff;transform:scaleX(0.9832);">Add-ins</span>
<span class="t" style="left:435.2px;top:117px;font-size:8.0px;line-height:10.4px;color:#f0f0f0;transform:scaleX(0.9512);">Add-ins</span>
<span class="t" style="left:478.8px;top:86px;font-size:9.3px;line-height:12.09px;color:#fff;transform:scaleX(0.9130);">Analyze</span>
<span class="t" style="left:486px;top:98px;font-size:9.3px;line-height:12.09px;color:#fff;transform:scaleX(0.8808);">Data</span>
<span class="t" style="left:525.3px;top:86px;font-size:9.3px;line-height:12.09px;color:#fff;transform:scaleX(0.8708);">Create</span>
<span class="t" style="left:526.5px;top:98px;font-size:9.3px;line-height:12.09px;color:#fff;transform:scaleX(0.8422);">a PDF</span>
<span class="t" style="left:557.5px;top:86px;font-size:9.3px;line-height:12.09px;color:#fff;transform:scaleX(0.8708);">Create a PDF</span>
<span class="t" style="left:555.4px;top:98px;font-size:9.3px;line-height:12.09px;color:#fff;transform:scaleX(0.9085);">and Share link</span>
<span class="t" style="left:541.5px;top:117px;font-size:8.0px;line-height:10.4px;color:#f0f0f0;transform:scaleX(0.9527);">Adobe Acrobat</span>
<span class="t" style="left:4.6px;top:139px;font-size:12px;line-height:15.6px;color:#fff;transform:scaleX(1.0485);">B2</span>
<span class="t" style="left:130.8px;top:138px;font-size:12.5px;line-height:16.25px;color:#e2e2e2;transform:scaleX(1.0740);font-family:'Liberation Serif',serif;font-style:italic;">fx</span>
<span class="t" style="left:79.93px;top:182px;font-size:12.8px;line-height:16.64px;color:#f4f4f4;-webkit-text-stroke:0;">A</span>
<span class="t" style="left:193.93px;top:182px;font-size:12.8px;line-height:16.64px;color:#f4f4f4;-webkit-text-stroke:0;">B</span>
<span class="t" style="left:278.48px;top:182px;font-size:12.8px;line-height:16.64px;color:#f4f4f4;-webkit-text-stroke:0;">C</span>
<span class="t" style="left:344.67px;top:182px;font-size:12.8px;line-height:16.64px;color:#f4f4f4;-webkit-text-stroke:0;">D</span>
<span class="t" style="left:411.23px;top:182px;font-size:12.8px;line-height:16.64px;color:#f4f4f4;-webkit-text-stroke:0;">E</span>
<span class="t" style="left:477.79px;top:182px;font-size:12.8px;line-height:16.64px;color:#f4f4f4;-webkit-text-stroke:0;">F</span>
<span class="t" style="left:542.92px;top:182px;font-size:12.8px;line-height:16.64px;color:#f4f4f4;-webkit-text-stroke:0;">G</span>
<span class="t" style="left:609.48px;top:182px;font-size:12.8px;line-height:16.64px;color:#f4f4f4;-webkit-text-stroke:0;">H</span>
<span class="t" style="left:678.52px;top:182px;font-size:12.8px;line-height:16.64px;color:#f4f4f4;-webkit-text-stroke:0;">I</span>
<span class="t" style="left:5.7px;top:202px;font-size:12.8px;line-height:16.64px;color:#f4f4f4;transform:scaleX(0.8982);-webkit-text-stroke:0;">1</span>
<span class="t" style="left:5.7px;top:222px;font-size:12.8px;line-height:16.64px;color:#f4f4f4;transform:scaleX(0.8982);-webkit-text-stroke:0;">2</span>
<span class="t" style="left:5.7px;top:243px;font-size:12.8px;line-height:16.64px;color:#f4f4f4;transform:scaleX(0.8982);-webkit-text-stroke:0;">3</span>
<span class="t" style="left:5.7px;top:263px;font-size:12.8px;line-height:16.64px;color:#f4f4f4;transform:scaleX(0.8982);-webkit-text-stroke:0;">4</span>
<span class="t" style="left:5.7px;top:284px;font-size:12.8px;line-height:16.64px;color:#f4f4f4;transform:scaleX(0.8982);-webkit-text-stroke:0;">5</span>
<span class="t" style="left:5.7px;top:304px;font-size:12.8px;line-height:16.64px;color:#f4f4f4;transform:scaleX(0.8982);-webkit-text-stroke:0;">6</span>
<span class="t" style="left:5.7px;top:325px;font-size:12.8px;line-height:16.64px;color:#f4f4f4;transform:scaleX(0.8982);-webkit-text-stroke:0;">7</span>
<span class="t" style="left:5.7px;top:345px;font-size:12.8px;line-height:16.64px;color:#f4f4f4;transform:scaleX(0.8982);-webkit-text-stroke:0;">8</span>
<span class="t" style="left:5.7px;top:366px;font-size:12.8px;line-height:16.64px;color:#f4f4f4;transform:scaleX(0.8982);-webkit-text-stroke:0;">9</span>
<span class="t" style="left:3.0500000000000007px;top:386px;font-size:12.8px;line-height:16.64px;color:#f4f4f4;transform:scaleX(0.8782);-webkit-text-stroke:0;">10</span>
<span class="t" style="left:3.0500000000000007px;top:407px;font-size:12.8px;line-height:16.64px;color:#f4f4f4;transform:scaleX(0.9401);-webkit-text-stroke:0;">11</span>
<span class="t" style="left:23.5px;top:202px;font-size:13px;line-height:16.9px;color:#fff;font-weight:700;transform:scaleX(1.0624);">Employee Name</span>
<span class="t" style="left:148.2px;top:202px;font-size:13px;line-height:16.9px;color:#111;font-weight:700;transform:scaleX(1.0281);">LENB function</span>
<span class="t" style="left:24.5px;top:221px;font-size:14px;line-height:18.2px;color:#111;transform:scaleX(0.9726);">David Joseph</span>
<span class="t" style="left:24.5px;top:241px;font-size:14px;line-height:18.2px;color:#111;transform:scaleX(1.0384);">Martin</span>
<span class="t" style="left:24.7px;top:261px;font-size:14px;line-height:18.2px;color:#111;transform:scaleX(0.9313);">Sejal</span>
<span class="t" style="left:24.5px;top:282px;font-size:14px;line-height:18.2px;color:#111;transform:scaleX(0.9680);">Dennis</span>
<span class="t" style="left:24.7px;top:302px;font-size:14px;line-height:18.2px;color:#111;transform:scaleX(0.9742);">George</span>
<span class="t" style="left:24.5px;top:323px;font-size:14px;line-height:18.2px;color:#111;transform:scaleX(0.9316);">Ryaan</span>
<span class="t" style="left:84.3px;top:425px;font-size:10.3px;line-height:13.39px;color:#222;transform:scaleX(0.9612);">LENB function example 1</span>
<span class="t" style="left:217.3px;top:427px;font-size:10.3px;line-height:13.39px;color:#fff;transform:scaleX(0.9828);">unique example 2</span>
<span class="t" style="left:318px;top:427px;font-size:10.3px;line-height:13.39px;color:#fff;transform:scaleX(1.0005);">Findb functio</span>
<span class="t" style="left:5px;top:448px;font-size:8.6px;line-height:11.18px;color:#fff;transform:scaleX(0.8131);">Ready</span>
<span class="t" style="left:74.6px;top:448px;font-size:8.6px;line-height:11.18px;color:#fff;font-weight:700;transform:scaleX(0.8880);">Accessibility: Investigate</span>
<span class="t" style="left:689.6px;top:448px;font-size:8.6px;line-height:11.18px;color:#f0f0f0;transform:scaleX(0.8824);">100%</span>
</div>
</body></html>
